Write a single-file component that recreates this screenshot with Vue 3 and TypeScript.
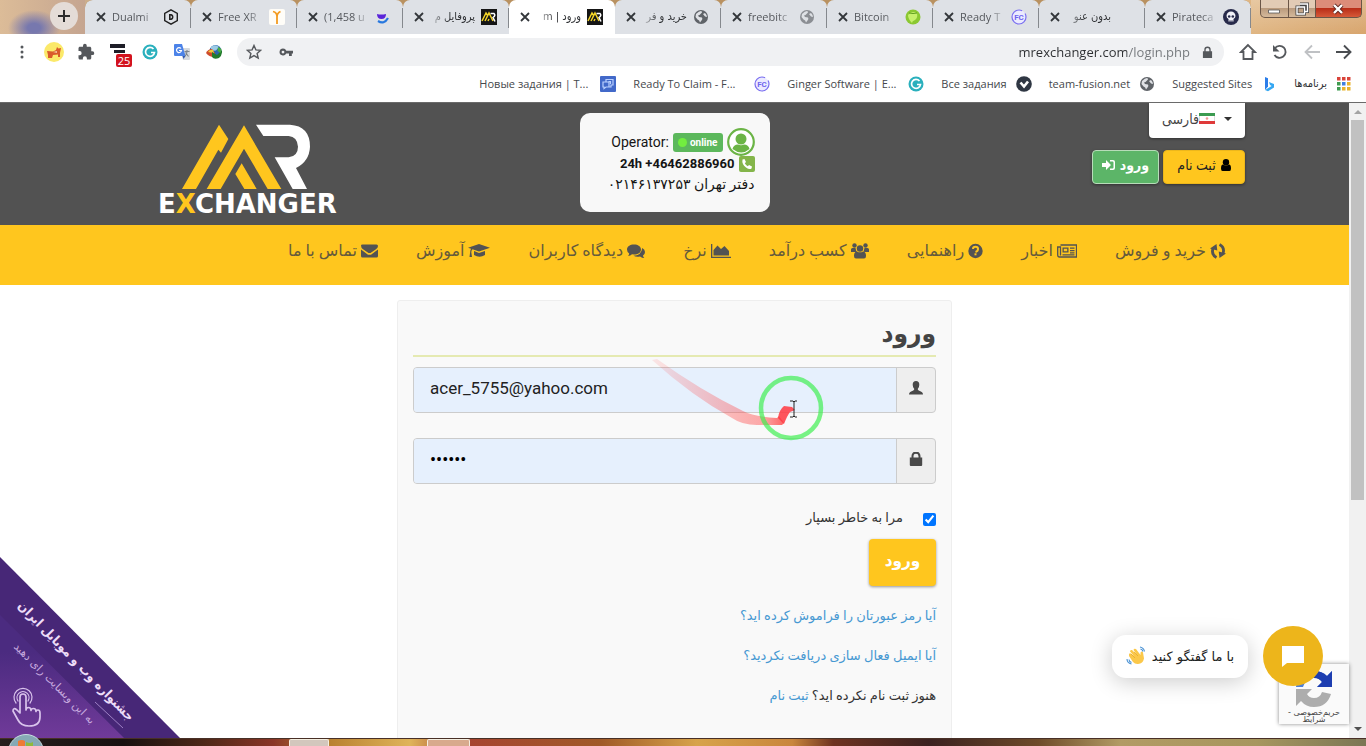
<script setup lang="ts">
import { ref } from 'vue'

interface Tab { title: string; icon: string; rtl?: boolean; active?: boolean }
interface Bookmark { title: string; icon: string; rtl?: boolean; wide?: boolean }
interface NavItem { label: string; icon: string; w: number }

const email = ref('acer_5755@yahoo.com')
const password = ref('secret')
const remember = ref(true)
const address = ref('mrexchanger.com/login.php')

const mr = '<path fill="#151515" d="M0 0h16v16H0z"/><path fill="none" stroke="#f2d327" stroke-width="1.5" d="M1 12 5 4l2 3M4 12l4-8 4 8M7 12l1-2"/><path fill="none" stroke="#fff" stroke-width="1.5" d="M9.500 4.500H13q2 2-1 4l2 4"/>'
const globe = '<circle cx="8" cy="8" r="7" fill="#5f6368"/><path fill="#dfe1e5" d="M3 5q3-3 5-3 2 1 0 2.500L6.500 6 5 6.500 6 8l3 .5q1 1.500-.5 3L7 13.500Q6.500 11 4.500 10.500L2.500 8zM10 5l2-1q2 2 2 4l-2-.5z"/>'
const fc = '<circle cx="8" cy="8" r="7" fill="#ecebff" stroke="#7a6ff0" stroke-width="1.200" stroke-dasharray="36 4"/><text x="8" y="11" text-anchor="middle" font-family="Roboto" font-weight="700" font-size="8" fill="#7066ee">FC</text>'
const grammar = '<circle cx="8" cy="8" r="7.500" fill="#2ab0bd"/><path d="M11.500 5A4.500 4.500 0 1 0 12.500 8.500H9" fill="none" stroke="#fff" stroke-width="1.700"/>'

const icons: Record<string, string> = {
  mr, globe, fc, grammar,
  globeLight: '<g opacity=".65">' + globe + '</g>',
  none: '',
  dual: '<path d="M8 .8 14.300 4.400v7.200L8 15.200 1.700 11.600V4.400z" fill="none" stroke="#222" stroke-width="1.400"/><path d="M6 5h2.500Q10.500 5.500 10.500 8T8.500 11H6z" fill="#222"/><path d="M7.600 6.500v3q1.500-.2 1.400-1.500T7.600 6.500" fill="#dfe1e5"/>',
  free: '<rect width="16" height="16" rx="2" fill="#fffdf8"/><path d="M4 2.500q4 1 4 5V15M8 8q0-4 3.500-5.500" fill="none" stroke="#f39b21" stroke-width="1.800"/>',
  smile: '<path d="M2 5q4 1 9 0 0 5-4.500 5T2 5z" fill="#5a25d9"/><path d="M3 12q6 4 10-3" fill="none" stroke="#2878df" stroke-width="2.200"/>',
  bitcoin: '<circle cx="8" cy="8" r="7.500" fill="#8bc832"/><path d="M3 6q4-5 9-1.500 1 4-2 6.500-3 1-3 3Q3 10 3 6" fill="#c6f06c"/><path d="M4 4q4 1 8 0" stroke="#5f9d20" fill="none"/>',
  pirate: '<circle cx="8" cy="8" r="8" fill="#272a4a"/><path d="M3.500 7a4.500 4.500 0 0 1 9 0q0 2-2 3v2.500h-5V10q-2-1-2-3" fill="#f1f1f7"/><circle cx="6.200" cy="7.500" r="1.300" fill="#272a4a"/><circle cx="9.800" cy="7.500" r="1.300" fill="#272a4a"/><path d="M7 11v2M9 11v2" stroke="#272a4a" stroke-width=".7"/>',
  cards: '<rect width="16" height="16" rx="1" fill="#4269c9"/><path d="M3 6h6v5H6l-2 1.500V11H3zM6 6V3.500h7V9h-2v2H9M8.500 5.500h2V8" fill="none" stroke="#b9d0ff" stroke-width="1.200"/>',
  check: '<circle cx="8" cy="8" r="7.800" fill="#2f3743"/><path d="M4.500 6.500 8 10.500l4-5" fill="none" stroke="#fff" stroke-width="2.600"/>',
  bing: '<path d="M4 1l3 1.200v8.300L4 14z" fill="#2b7de9"/><path d="M4 14 7 15.300 13 11.500V8L8 6l1 3 1.700.9z" fill="#35a7f2"/>',
  apps: ['#d9443a', '#d9443a', '#d9443a', '#3f9b50', '#3f7fe0', '#e8b22b', '#3f9b50', '#e8b22b', '#e8b22b']
    .map((c, i) => `<rect x="${1 + (i % 3) * 5}" y="${1 + Math.floor(i / 3) * 5}" width="3.500" height="3.500" fill="${c}"/>`).join(''),
}

const tabs: Tab[] = [
  { title: 'Dualmi', icon: 'dual' },
  { title: 'Free XR', icon: 'free' },
  { title: '(1,458 u', icon: 'smile' },
  { title: 'پروفایل م', icon: 'mr', rtl: true },
  { title: 'ورود | m', icon: 'mr', rtl: true, active: true },
  { title: 'خرید و فر', icon: 'globe', rtl: true },
  { title: 'freebitc', icon: 'globeLight' },
  { title: 'Bitcoin', icon: 'bitcoin' },
  { title: 'Ready T', icon: 'fc' },
  { title: 'بدون عنو', icon: 'none', rtl: true },
  { title: 'Pirateca', icon: 'pirate' },
]

const bookmarks: Bookmark[] = [
  { title: 'Новые задания | T...', icon: 'cards', wide: true },
  { title: 'Ready To Claim - F...', icon: 'fc', wide: true },
  { title: 'Ginger Software | E...', icon: 'grammar', wide: true },
  { title: 'Все задания', icon: 'check' },
  { title: 'team-fusion.net', icon: 'globe' },
  { title: 'Suggested Sites', icon: 'bing' },
  { title: 'برنامه‌ها', icon: 'apps', rtl: true },
]

const nav: NavItem[] = [
  { label: 'خرید و فروش', w: 16, icon: '<path d="M6.500 14.500Q1 11.500 3 5.500M9.500 1.500Q15 4.500 13 10.500" fill="none" stroke="currentColor" stroke-width="2.800"/><path d="M0 5.500 6.500 1l.8 6.500zM16 10.500 9.500 15l-.8-6.500z"/>' },
  { label: 'اخبار', w: 20, icon: '<path d="M3.500 2H19.500V14H2.500Q.7 14 .7 12V4H3.500V12.500" fill="none" stroke="currentColor" stroke-width="1.300"/><path fill-rule="evenodd" d="M5.500 4.500h6v5h-6zm1.300 1.300v2.400h3.400V5.800zM13 4.500h4.500v1.200H13zM13 7h4.500v1.200H13zM13 9.200h4.500v1.200H13zM5.500 11.200h12v1.200h-12z"/>' },
  { label: 'راهنمایی', w: 15, icon: '<circle cx="7.500" cy="8" r="7.200"/><path d="M5 6Q5 3.800 7.500 3.800T10 6 7.500 9" fill="none" stroke="#ffc61e" stroke-width="2"/><path fill="#ffc61e" d="M6.500 10.300h2v2h-2z"/>' },
  { label: 'کسب درآمد', w: 18, icon: '<circle cx="3.500" cy="2.500" r="2.200"/><circle cx="14.500" cy="2.500" r="2.200"/><circle cx="9" cy="5.500" r="3.200"/><path d="M0 9V6.500Q0 5 1.500 5H4.500Q5 8 6 9zM18 9V6.500Q18 5 16.500 5H13.500Q13 8 12 9zM3 13q0-4.500 3-4.500 3 1.700 6 0 3 0 3 4.500 0 2.500-2 2.500H5Q3 15.500 3 13"/>' },
  { label: 'نرخ', w: 20, icon: '<path d="M0 1h1.300v12.700H20V15H0zM2.500 12.500V7L6.500 2.500 10 6l3.500-3 4.500 5v4.500z"/>' },
  { label: 'دیدگاه کاربران', w: 18, icon: '<path d="M7 1.500c4 0 7 2 7 5s-3 5-7 5l-2-.2Q3.500 12.800 1 13q1.200-1.200 1.200-2.500Q0 9 0 6.500c0-3 3-5 7-5z"/><path d="M15.200 5Q18 6.500 18 9t-2 3.500q0 1.200 1.300 2.500Q15 15 13 13.500 9 14.200 6.500 12.700 14.500 12.500 15.200 5"/>' },
  { label: 'آموزش', w: 22, icon: '<path d="M11 1l11 3.800L11 8.500 4.500 6.300q-1.200 1-1.200 3L4 14H1.500l.6-4.500q.1-2.500 1-3.800L0 4.800zM6 8l5 2 6-2v4q-5.500 3.500-11 0z"/>' },
  { label: 'تماس با ما', w: 17, icon: '<path d="M0 2.500Q0 1.500 1.500 1.500h14q1.500 0 1.500 1.500 0 2-2 3.300L9.500 10h-2L2 6.300Q0 5 0 2.500M0 6.500q4 3 7 5.200h3Q13 9.500 17 6.500V13q0 1.500-1.500 1.500h-14Q0 14.500 0 13z"/>' },
]
</script>

<template>
  <div class="screen">
    <header class="browser">
      <div class="tabstrip">
        <div class="strip-start"><button class="new-tab" aria-label="New tab"><svg viewBox="0 0 12 12" width="12" height="12"><path d="M6 0v12M0 6h12" stroke="#2d2d2d" stroke-width="2" /></svg></button></div>
        <div class="tabs">
          <div v-for="(t, i) in tabs" :key="i" class="tab" :class="{ active: t.active }">
            <button class="close" aria-label="Close tab"><svg viewBox="0 0 10 10" width="10" height="10"><path d="M1 1l8 8M9 1 1 9" stroke="#33363a" stroke-width="1.800" /></svg></button>
            <span class="tab-title" :class="{ rtl: t.rtl }">{{ t.title }}</span>
            <svg class="fav" viewBox="0 0 16 16" v-html="icons[t.icon]"></svg>
          </div>
        </div>
        <div class="win-controls">
          <button class="win min" aria-label="Minimize"><svg viewBox="0 0 12 12" width="12" height="12"><path d="M.5 7h11v3H.5z" fill="#fff" stroke="#555" stroke-width=".8" /></svg></button>
          <button class="win max" aria-label="Restore"><svg viewBox="0 0 14 14" width="14" height="14"><path d="M5 2h7.500v7.500H10M2 5h7.500v7H2z" fill="none" stroke="#444" stroke-width="3" /><path d="M5 2h7.500v7.500H10M2 5h7.500v7H2z" fill="none" stroke="#fff" stroke-width="1.400" /></svg></button>
          <button class="win exit" aria-label="Close"><svg viewBox="0 0 12 12" width="12" height="12"><path d="M2 2l8 8M10 2l-8 8" stroke="#5e2620" stroke-width="4" /><path d="M2 2l8 8M10 2l-8 8" stroke="#fff" stroke-width="2.400" /></svg></button>
        </div>
      </div>

      <div class="toolbar">
        <button class="tool" aria-label="Menu"><svg viewBox="0 0 16 16" width="16" height="16" fill="#55585c"><circle cx="8" cy="3" r="1.500" /><circle cx="8" cy="8" r="1.500" /><circle cx="8" cy="13" r="1.500" /></svg></button>
        <button class="tool" aria-label="Extension"><svg viewBox="0 0 20 20" width="20" height="20"><circle cx="10" cy="10" r="10" fill="#fbe96a" /><path d="M3 9l6 .5L12 8l1-3 1.500 1.500L17 6l-1 5v4h-2v-2.500l-5 .5-1 3H4v-3z" fill="#d95a2b" /><path d="M9 10l4-1v2z" fill="#f6c6a0" /></svg></button>
        <button class="tool" aria-label="Extensions"><svg viewBox="0 0 24 24" width="18" height="18"><path fill="#55585c" d="M20.500 11H19V7c0-1.100-.9-2-2-2h-4V3.500a2.500 2.500 0 0 0-5 0V5H4c-1.100 0-2 .9-2 2v3.800h1.500a2.700 2.700 0 0 1 0 5.400H2V20c0 1.100.9 2 2 2h3.800v-1.500a2.700 2.700 0 0 1 5.400 0V22H17c1.100 0 2-.9 2-2v-4h1.500a2.500 2.500 0 0 0 0-5z" /></svg></button>
        <button class="tool blocks" aria-label="Tasks"><svg viewBox="0 0 16 16" width="16" height="16"><path d="M0 0h15v4H0zM4 6h11v3H4z" fill="#1e1e28" /></svg><span class="count">25</span></button>
        <button class="tool" aria-label="Grammar"><svg viewBox="0 0 16 16" width="16" height="16" v-html="icons.grammar"></svg></button>
        <button class="tool" aria-label="Translate"><svg viewBox="0 0 16 16" width="16" height="16"><path d="M6 4h9q1 0 1 1v10q0 1-1 1H9z" fill="#d6dade" /><path d="M1 0h7l3.500 12H1q-1 0-1-1V1q0-1 1-1" fill="#4c83e8" /><path d="M8.500 12h3L9.500 15z" fill="#3158aa" /><path d="M7 4.500A2.500 2.500 0 1 0 7.500 6.500H5" fill="none" stroke="#fff" stroke-width="1.200" /><path d="M10.500 7.500h5M13 6v1.500q0 3-2 4.500M11.500 8.500l3 4" stroke="#7c858d" stroke-width="1.100" fill="none" /></svg></button>
        <button class="tool" aria-label="Download manager"><svg viewBox="0 0 16 16" width="16" height="16"><circle cx="9.500" cy="7" r="6" fill="#2b66ad" /><path d="M5 3q4-3.500 8 0l-3 3.500-5 .5z" fill="#9ccbe6" /><path d="M0 9Q2 5 6 5l3 4-1 4q-5 0-8-4" fill="#cf4b2b" /><path d="M2 8q2-3 5-2l1 3z" fill="#f0c93c" /><path d="M6 8l5 3 5-5q.5 5-3 8-5 2-7-1z" fill="#227a2c" /><path d="M12 3l3.500 2-1 4-3-2z" fill="#49ad43" /></svg></button>
        <div class="omnibox">
          <button class="plain" aria-label="Bookmark"><svg viewBox="0 0 16 16" width="16" height="16"><path d="M8 1.500l1.900 4.400 4.800.4-3.600 3.100 1.100 4.700L8 11.600l-4.200 2.500 1.100-4.700L1.300 6.300l4.800-.4z" fill="none" stroke="#55585c" stroke-width="1.400" /></svg></button>
          <button class="plain" aria-label="Passwords"><svg viewBox="0 0 16 16" width="16" height="16"><path fill="#55585c" fill-rule="evenodd" d="M5 4.500a3.500 3.500 0 0 1 3.300 2.300H15v2.700h-1.200V12H11V9.500H8.200A3.500 3.500 0 1 1 5 4.500m0 2.200a1.400 1.400 0 1 0 0 2.800 1.400 1.400 0 0 0 0-2.800" /></svg></button>
          <input v-model="address" class="address" aria-label="Address" />
          <svg viewBox="0 0 12 14" width="11" height="13"><path fill="#55585c" fill-rule="evenodd" d="M1 5.500h1.500V4a3.500 3.500 0 0 1 7 0v1.500H11V13H1zm3 0h4V4a2 2 0 0 0-4 0z" /></svg>
        </div>
        <button class="tool" aria-label="Home"><svg viewBox="0 0 18 18" width="18" height="18"><path d="M9 2 2 9h2.500v7h9V9H16z" fill="none" stroke="#55585c" stroke-width="1.800" /></svg></button>
        <button class="tool" aria-label="Reload"><svg viewBox="0 0 18 18" width="18" height="18"><path d="M4 5a6 6 0 1 1-.5 7" fill="none" stroke="#55585c" stroke-width="1.900" /><path d="M2 2v6.500h6.500z" fill="#55585c" /></svg></button>
        <button class="tool" aria-label="Forward"><svg viewBox="0 0 18 18" width="18" height="18"><path d="M17 9H3M9 2.500 2.500 9 9 15.500" fill="none" stroke="#bfc1c4" stroke-width="1.800" /></svg></button>
        <button class="tool" aria-label="Back"><svg viewBox="0 0 18 18" width="18" height="18"><path d="M1 9h14M9 2.500 15.500 9 9 15.500" fill="none" stroke="#4a4d51" stroke-width="1.900" /></svg></button>
      </div>

      <nav class="bookmarks">
        <a v-for="b in bookmarks" :key="b.title" href="#" class="bookmark">
          <span :class="{ rtl: b.rtl, wide: b.wide }">{{ b.title }}</span>
          <svg class="fav" viewBox="0 0 16 16" v-html="icons[b.icon]"></svg>
        </a>
      </nav>
    </header>

    <div class="viewport">
      <div class="page">
        <div class="top">
          <a href="#" class="logo" aria-label="MR Exchanger">
            <svg viewBox="0 0 184 98" width="184" height="98">
              <g transform="translate(-18 -20) scale(.33333)">
                <path fill="#ffc61e" d="M126 255 237 62l28 43-22 41-8-9-67 118zM200 255 312 64l112 191h-41L312 134 242 255zM305 178l45 77h-37l-27-45z" />
                <path fill="#fff" d="M348 62h102q60 4 60 66-2 44-42 64l33 63h-43l-54-95h42q28-4 28-32-2-30-28-32h-76z" />
              </g>
              <text x="0" y="89" class="brand">E<tspan fill="#ffc61e">X</tspan>CHANGER</text>
            </svg>
          </a>

          <div class="operator">
            <div class="op-line"><span>Operator:</span><span class="badge"><i></i>online</span>
              <svg viewBox="0 0 28 28" width="28" height="28"><circle cx="14" cy="14" r="12.800" fill="#fff" stroke="#6bb446" stroke-width="2.200" /><circle cx="14" cy="11" r="5.500" fill="#6bb446" /><path d="M5.500 21q1-4.500 5.500-4.500 3 1.500 6 0 4.500 0 5.500 4.500-8 7-17 0" fill="#6bb446" /></svg></div>
            <div class="op-line phone"><span>24h +46462886960</span>
              <svg viewBox="0 0 16 16" width="16" height="16"><rect width="16" height="16" rx="2" fill="#84b54a" /><path d="M3.500 3.500 5.500 3 7 6 5.800 7.300q1 2 3 3L10 9l3 1.500-.5 2Q10.500 14 7 11.500 2.500 8 3.500 3.500" fill="#fff" /></svg></div>
            <div class="op-line office" dir="rtl">دفتر تهران ۰۲۱۴۶۱۳۷۲۵۳</div>
          </div>

          <div class="account" dir="rtl">
            <button class="btn lang"><svg viewBox="0 0 8 4" width="8" height="4"><path d="M0 0h8L4 4z" fill="#333" /></svg><span class="lang-name"><svg viewBox="0 0 16 11" width="16" height="11"><path fill="#fff" d="M0 0h16v11H0z" /><path fill="#3c9b51" d="M0 0h16v3H0z" /><path fill="#df3a3a" d="M0 8h16v3H0z" /><path fill="#ddd" d="M0 3h1v5H0zM15 3h1v5h-1z" /><circle cx="8" cy="5.500" r="1.300" fill="#ef9a9a" /></svg>فارسی</span></button>
            <div class="auth">
              <a href="#" class="btn signup"><svg viewBox="0 0 10 12" width="10" height="12"><circle cx="5" cy="3.300" r="3.200" /><path d="M0 9.500Q0 5.500 2 5.500q3 2 6 0 2 0 2 4 0 2.500-1.500 2.500h-7Q0 12 0 9.500" /></svg>ثبت نام</a>
              <a href="#" class="btn signin">ورود<svg viewBox="0 0 13 12" width="13" height="12"><path d="M0 4h4V1l5 5-5 5V8H0zM8 1h3q2 0 2 2v6q0 2-2 2H8V9.500h2.500q1 0 1-1v-5q0-1-1-1H8z" fill="#fff" /></svg></a>
            </div>
          </div>
        </div>

        <nav class="menu" dir="rtl">
          <a v-for="n in nav" :key="n.label" href="#"><svg :viewBox="`0 0 ${n.w} 16`" :width="n.w" height="16" fill="currentColor" v-html="n.icon"></svg>{{ n.label }}</a>
        </nav>

        <main>
          <form class="login" dir="rtl" @submit.prevent>
            <h1>ورود</h1>
            <div class="group">
              <label for="email" aria-label="Email"><svg viewBox="0 0 14 14" width="14" height="14" fill="#494949"><path d="M7 0q3.300 0 3.300 3.700Q10.300 7 8.700 8q0 1.200 1.500 1.800Q14 11 14 13.500H0Q0 11 3.800 9.800 5.300 9.200 5.300 8 3.700 7 3.700 3.700 3.700 0 7 0" /></svg></label>
              <input id="email" v-model="email" type="email" dir="ltr" />
            </div>
            <div class="group">
              <label for="password" aria-label="Password"><svg viewBox="0 0 14 14" width="14" height="14"><path fill="#494949" fill-rule="evenodd" d="M.8 5.500h1.700V4a4 4 0 0 1 9 0v1.500h1.700V13q0 1-1 1H1.800q-1 0-1-1zm3.700 0h5V4.300a2.500 2.500 0 0 0-5 0z" /></svg></label>
              <input id="password" v-model="password" type="password" dir="ltr" />
            </div>
            <div class="remember"><input id="remember" v-model="remember" type="checkbox" /><label for="remember">مرا به خاطر بسپار</label></div>
            <button class="submit" type="submit">ورود</button>
            <p><a href="#">آیا رمز عبورتان را فراموش کرده اید؟</a></p>
            <p><a href="#">آیا ایمیل فعال سازی دریافت نکردید؟</a></p>
            <p>هنوز ثبت نام نکرده اید؟ <a href="#">ثبت نام</a></p>
          </form>
        </main>
      </div>

      <div class="scrollbar">
        <svg viewBox="0 0 8 4" width="8" height="4"><path d="M0 4h8L4 0z" fill="#a3a3a3" /></svg>
        <div class="thumb"></div>
        <svg viewBox="0 0 8 4" width="8" height="4"><path d="M0 0h8L4 4z" fill="#505050" /></svg>
      </div>

      <svg class="ribbon" viewBox="0 0 180 181" width="180" height="181">
        <defs>
          <linearGradient id="violet" x1="0" y1="0" x2="0" y2="1"><stop offset=".3" stop-color="#4b2b80" /><stop offset="1" stop-color="#703a99" /></linearGradient>
        </defs>
        <path d="M0 0 180 181H0z" fill="#472777" />
        <path d="M0 58 124 181H0z" fill="url(#violet)" />
        <text class="fest" transform="translate(73 107) rotate(46)" text-anchor="middle">جشنواره وب و موبایل ایران</text>
        <text class="vote" transform="translate(52 129) rotate(45)" text-anchor="middle">به این وبسایت رای دهید</text>
        <path d="M95 145l28 26" stroke="#9d7fc4" />
        <g fill="none" stroke="#d9c3ec" stroke-width="1.700" stroke-linejoin="round" stroke-linecap="round">
          <path d="M20 156v-16q0-3 3-3t3 3v13q0-2.500 2.500-2.500t2.500 3q0-2 2.500-2t2.500 3q0-1.500 2-1.500t2 3V160q0 9-11 9-8 0-11-6l-5-9q0-4 4-1z" />
          <path d="M18 144a6 6 0 1 1 10 0M16 146a9 9 0 1 1 14 0" stroke-width="1.200" />
        </g>
      </svg>

      <div class="captcha">
        <svg viewBox="0 0 40 40" width="40" height="40"><path d="M2 18Q3 3 20 2q8 0 13 5l5-5v16H23l5-5q-4-5-9-4-8 1-10 9z" fill="#4d80d8" /><path d="M20 2q8 0 13 5l5-5v16H23l5-5q-3-4-8-4z" fill="#1d3db0" /><path d="M2 20v17l5-5q5 6 13 6 13 0 17-13l-9-2q-2 6-8 6-5 0-7-4l5-5z" fill="#adadad" /></svg>
        <span dir="rtl">حریم‌خصوصی -<br />شرایط</span>
      </div>

      <div class="chat">
        <div class="bubble" dir="rtl">با ما گفتگو کنید
          <svg viewBox="0 0 20 20" width="20" height="20"><path d="M3 8q1-1.500 2.500 0L8 10 4 5.500Q4 3.500 6 4l5 5-3.500-5Q8 2 10 3l4.500 6V6.500q1.500-2 2.500 0l1 6q-1 5-6 5.500-3 .3-5-2L3 10z" fill="#fbc84a" /><path d="M5 8l4 4M8 6l4 4" stroke="#e9a92c" stroke-width=".8" /><path d="M14 1q4 1 4.500 4.500M14.500 3q2 .5 2.500 2.500M1 13q0 4 4.500 5M3 13.500q0 2 2.500 3" fill="none" stroke="#4b93d5" stroke-width="1.100" /></svg>
        </div>
        <button class="chat-btn" aria-label="Chat"><svg viewBox="0 0 22 21" width="22" height="21"><path d="M0 0h22v17H5l-5 4z" fill="#fff" /></svg></button>
      </div>

    </div>

    <footer class="taskbar">
      <svg class="orb" viewBox="0 0 36 12" width="36" height="12"><circle cx="18" cy="18" r="17.500" fill="#86a9b5" stroke="#c9dde2" /><path d="M10 12V7q4-2 7 0v5z" fill="#ee7b35" /><path d="M18 12V8q4 2 7 0v4z" fill="#8fba3c" /></svg>
      <span class="task first"></span><span class="task second"></span>
    </footer>

    <svg class="pointer" viewBox="0 0 180 90" width="180" height="90">
      <defs>
        <linearGradient id="trail" gradientUnits="userSpaceOnUse" x1="3" y1="0" x2="140" y2="0"><stop offset="0" stop-color="#f33" stop-opacity=".1" /><stop offset=".8" stop-color="#f44" stop-opacity=".45" /><stop offset="1" stop-color="#f33" stop-opacity=".85" /></linearGradient>
      </defs>
      <path d="M2 2 7 1Q50 32 93 53 105 59 127 60l2-2 5 7-2 2H107Q92 67 82 60 42 38 2 2" fill="url(#trail)" />
      <path d="M128 60Q129 52 134 48l8 1 3 3-5 2q-3 4-6 12z" fill="#ff3841" fill-opacity=".85" />
      <circle cx="141" cy="50" r="30" fill="none" stroke="#3bef4c" stroke-opacity=".68" stroke-width="4.500" />
      <path d="M140 43h3l1 1 1-1h2M144 44v14M140 59h3l1-1 1 1h2" fill="none" stroke="#222" />
    </svg>
  </div>
</template>

<style>
html, body { overflow: hidden; }
</style>

<style scoped>
* { box-sizing: border-box; }
svg { display: block; flex: none; }
button { border: 0; padding: 0; background: none; font: inherit; color: inherit; }
a { color: inherit; text-decoration: none; }
.screen { position: relative; display: flex; flex-direction: column; height: 100vh; font-family: "Open Sans", "DejaVu Sans", sans-serif; background: #fff; }

.tabstrip { display: flex; height: 34px; background: linear-gradient(90deg, #c9ab8c, #d9b98c 40%, #cdab6f 60%, #e1b987 90%, #d8a56d); }
.strip-start { display: flex; justify-content: flex-end; width: 85px; padding: 2px 7px 0 0; background: radial-gradient(ellipse 26px 18px at 34px 28px, #7778ae 25%, transparent), linear-gradient(90deg, #dcbc98, #c5a590); }
.new-tab { width: 28px; height: 28px; display: grid; place-items: center; border-radius: 50%; background: #e4dcd7; }
.tabs { flex: 1; display: flex; min-width: 0; background: #b99160; border-radius: 8px 8px 0 0; overflow: hidden; }
.tab { flex: 1; min-width: 0; display: flex; align-items: center; padding: 0 12px 0 11px; gap: 6px; background: linear-gradient(#85888d, #85888d) right 8px / 1px 20px no-repeat #dee1e6; border-radius: 7px 7px 0 0; font-size: 11px; color: #55585d; }
.tab.active { background: #fff; color: #3c4043; }
.close { width: 10px; height: 10px; }
.tab-title { flex: 1; min-width: 0; white-space: nowrap; line-height: 20px; mask-image: linear-gradient(90deg, #000 65%, #0003 95%); }
.tab-title.rtl { direction: rtl; mask-image: linear-gradient(270deg, #000 60%, #0003 95%); }
.rtl { direction: rtl; font-family: "DejaVu Sans Condensed", "DejaVu Sans", sans-serif; font-size: 11px; color: #2e3033; }
.fav { width: 16px; height: 16px; }
.win-controls { display: flex; align-items: flex-start; width: 115px; padding: 0 4px 0 9px; background: linear-gradient(#ffffff40, transparent); }
.win { height: 18px; display: grid; place-items: center; border: 1px solid #6b5647; border-top: 0; background: linear-gradient(#e2cbb5 45%, #ba9b7e 50%, #d5b99b); }
.min { flex: 28; border-radius: 0 0 0 5px; }
.max { flex: 27; border-left: 0; }
.exit { flex: 47; border-left: 0; border-radius: 0 0 5px 0; background: linear-gradient(#dc8c79 45%, #b92e18 50%, #d65a39); }

.toolbar { display: flex; align-items: center; height: 36px; padding: 0 6px; }
.tool { position: relative; width: 32px; height: 32px; display: grid; place-items: center; }
.count { position: absolute; left: 14px; top: 18px; width: 16px; height: 13px; border-radius: 2px; background: #d3121e; color: #fff; font-size: 11px; line-height: 13px; text-align: center; }
.omnibox { flex: 1; display: flex; align-items: center; gap: 16px; height: 28px; margin: 0 8px 0 7px; padding: 0 11px 0 9px; border-radius: 14px; background: #f0f1f3; }
.address { flex: 1; min-width: 0; border: 0; padding: 0; outline: 0; text-align: right; font: 13px/20px "Open Sans", sans-serif; color: transparent; background: linear-gradient(270deg, #73767a 63px, #2c2e31 63px); background-clip: text; }
.omnibox .address { margin-right: -4px; }
.bookmarks { display: flex; justify-content: flex-end; align-items: center; gap: 17px; height: 33px; padding: 0 14px 4px; border-bottom: 1px solid #6a6a6a; }
.bookmark { display: flex; align-items: center; gap: 9px; font-size: 11px; line-height: 20px; color: #45484c; white-space: nowrap; }
.wide { min-width: 112px; }

.viewport { position: relative; flex: 1; min-height: 0; display: flex; overflow: hidden; }
.page { flex: 1; min-width: 0; font-family: Roboto, "DejaVu Sans", sans-serif; }
.top { display: grid; grid-template-columns: 1fr 190px 1fr; height: 122px; padding: 0 104px; background: #525252; align-items: start; }
.logo { padding: 21px 0 0 54px; }
.brand { font: 700 26px "DejaVu Sans", sans-serif; fill: #fff; }
.operator { margin-top: 10px; height: 99px; padding: 15px 15px 0; border-radius: 10px; background: #f8f8f8; color: #151515; }
.op-line { display: flex; justify-content: flex-end; align-items: center; gap: 4px; height: 28px; font-size: 14px; white-space: nowrap; }
.op-line.phone { height: 16px; font: 700 13px/16px Roboto, sans-serif; }
.op-line.office { display: block; height: 24px; line-height: 24px; font-size: 14px; }
.badge { display: flex; align-items: center; gap: 3px; height: 19px; padding: 0 5px; border-radius: 3px; background: #5cb85c; color: #fff; font-size: 10px; font-weight: 700; }
.badge i { width: 9px; height: 9px; border-radius: 50%; background: #72ee3f; }
.account { display: flex; flex-direction: column; align-items: flex-start; gap: 12px; }
.btn { display: flex; align-items: center; justify-content: center; gap: 5px; height: 34px; border-radius: 4px; font-family: Roboto, "DejaVu Sans Condensed", "DejaVu Sans", sans-serif; font-size: 14px; box-shadow: 0 1px 3px #0006; white-space: nowrap; padding-bottom: 4px; }
.lang { width: 96px; height: 35px; gap: 9px; border-radius: 0 0 4px 4px; background: #fff; color: #444; }
.lang-name { display: flex; align-items: center; }
.auth { display: flex; gap: 4px; }
.signup { width: 82px; background: #ffc61e; color: #222; border: 1px solid #edb71b; }
.signin { width: 67px; background: #5cb568; color: #fff; border: 1px solid #b7dcb9; font-weight: 700; }
.menu { display: flex; justify-content: space-between; height: 60px; padding: 12px 123px 0 288px; background: #ffc61e; color: #655a3c; font-size: 16px; line-height: 28px; }
.menu a { display: flex; gap: 4px; align-items: center; height: 28px; white-space: nowrap; }
.menu a svg { color: #535353; }

main { display: flex; justify-content: center; padding-top: 15px; }
.login { width: 100%; max-width: 555px; height: 500px; padding: 14px 15px; border: 1px solid #eee; border-radius: 3px; background: #f9f9f9; font-size: 13px; color: #333; }
h1 { margin: 0 0 10px; height: 42px; border-bottom: 2px solid #e5eab2; font-size: 26px; line-height: 36px; color: #444; font-family: "DejaVu Sans Condensed", "DejaVu Sans", sans-serif; }
.group { display: flex; height: 46px; margin-bottom: 25px; border: 1px solid #ccc; border-radius: 4px; background: #eee; overflow: hidden; }
.group label { width: 38px; display: flex; align-items: center; justify-content: center; padding-bottom: 4px; }
.group input { flex: 1; min-width: 0; border: 0; border-right: 1px solid #ccc; padding: 0 16px 4px; outline: 0; background: #e6f0fd; font: 17px Roboto, sans-serif; color: #222; }
.group input[type="password"] { font-size: 18px; color: #000; }
.remember { display: flex; align-items: center; gap: 20px; height: 20px; margin-top: 25px; }
.remember input { width: 13px; height: 13px; margin: 0; }
.remember label { padding-bottom: 4px; }
.submit { display: block; width: 67px; height: 47px; margin: 10px 0 20px; padding-bottom: 5px; border-radius: 4px; background: #ffc61e; color: #fff; font: 700 17px "DejaVu Sans Condensed", "DejaVu Sans", sans-serif; box-shadow: 0 1px 3px #0006; }
p { margin: 0 0 20px; line-height: 20px; white-space: nowrap; }
p a { color: #4698d2; }

.scrollbar { display: flex; flex-direction: column; align-items: center; width: 17px; padding: 7px 0; background: #f1f1f1; }
.thumb { width: 13px; height: 380px; margin: 6px 0 auto; background: #c1c1c1; }
.ribbon { position: absolute; left: 0; bottom: 0; }
.fest { font: 700 13px "DejaVu Sans Condensed", "DejaVu Sans", sans-serif; fill: #eddcf8; }
.vote { font: 11px "DejaVu Sans", sans-serif; fill: #c7a9df; }
.captcha { position: absolute; right: 17px; bottom: 14px; width: 70px; height: 60px; display: flex; flex-direction: column; align-items: center; padding-top: 5px; background: #fafafa; box-shadow: 0 0 4px #888; font: 8px/7px "DejaVu Sans", sans-serif; color: #444; text-align: center; }
.chat { position: absolute; right: 43px; bottom: 52px; display: flex; align-items: center; gap: 15px; }
.bubble { display: flex; align-items: center; justify-content: center; gap: 6px; width: 136px; height: 43px; border-radius: 14px; background: #fff; box-shadow: 0 4px 22px #0003; font: 13px "DejaVu Sans", sans-serif; color: #222; white-space: nowrap; }
.chat-btn { width: 60px; height: 60px; display: grid; place-items: center; border-radius: 50%; background: #edb51b; }

.taskbar { position: relative; height: 8px; border-top: 1px solid #483027; background: linear-gradient(90deg, #27201e 0, #171010 9%, #4e2818 15%, #8a3527 20%, #b88030 24%, #dfb45a 30%, #a64431 34%, #a05a28 44%, #d7a34b 51%, #c9863d 58%, #6e3321 61%, #3b2120 68%, #6e4b2a 76%, #b29b65 82%, #a7965e 92%, #7b7654 100%); }
.orb { position: absolute; left: 8px; top: -5px; }
.task { position: absolute; top: 0; height: 8px; border: 1px solid #f5eee0; border-bottom: 0; border-radius: 2px 2px 0 0; }
.first { left: 289px; width: 40px; background: #d3c7bd; }
.second { left: 427px; width: 43px; background: #d8aa8d; }
.pointer { position: absolute; left: 650px; top: 358px; pointer-events: none; }
</style>
